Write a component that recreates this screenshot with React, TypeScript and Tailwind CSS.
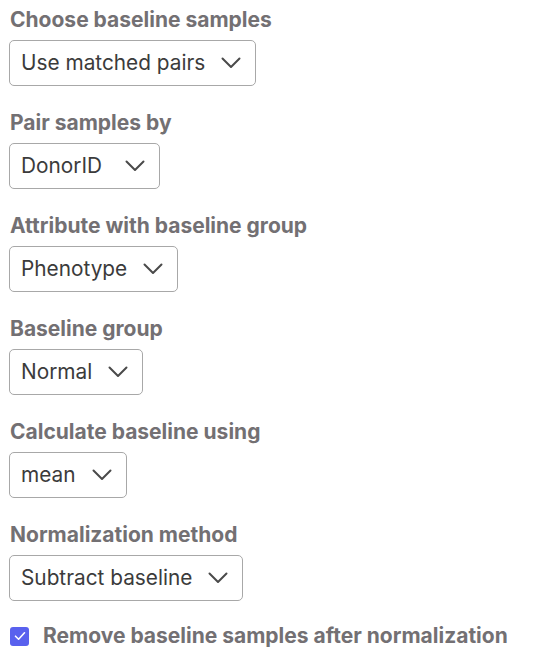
import React from "react";

const groups = [
  { label: "Choose baseline samples", value: "Use matched pairs", extra: "" },
  { label: "Pair samples by", value: "DonorID", extra: "pr-[7px]" },
  { label: "Attribute with baseline group", value: "Phenotype", extra: "" },
  { label: "Baseline group", value: "Normal", extra: "" },
  { label: "Calculate baseline using", value: "mean", extra: "" },
  { label: "Normalization method", value: "Subtract baseline", extra: "" },
];

function Chevron() {
  return (
    <svg width="20" height="12" viewBox="0 0 20 12" fill="none" className="shrink-0">
      <path d="M1.5 1.5 L10 10 L18.5 1.5" stroke="#4a4a4a" strokeWidth="2" strokeLinecap="round" strokeLinejoin="round" />
    </svg>
  );
}

export default function App() {
  return (
    <div className="w-[542px] h-[670px] bg-white pl-[9px] pt-[7px]" style={{ fontFamily: "Inter, 'Noto Sans', sans-serif" }}>
      <div className="flex flex-col gap-[24px]">
        {groups.map((g) => (
          <div key={g.label} className="flex flex-col items-start gap-[7px]">
            <div className="text-[21px] leading-[26px] font-bold text-[#737073] pl-[1px]">{g.label}</div>
            <div className="h-[46px] flex items-center gap-[16px] pl-[11px] pr-[14px] border border-[#a8a8a8] rounded-[5px] text-[20.8px] text-[#3b3b3b]">
              <span className={g.extra}>{g.value}</span>
              <Chevron />
            </div>
          </div>
        ))}
      </div>
      <div className="flex items-center gap-[14px] mt-[22px] pl-[1px]">
        <div className="w-[19px] h-[19px] rounded-[3px] bg-[#5961ee] flex items-center justify-center">
          <svg width="12" height="10" viewBox="0 0 12 10" fill="none">
            <path d="M1.5 5.2 L4.6 8.2 L10.5 1.8" stroke="white" strokeWidth="1.6" strokeLinecap="round" strokeLinejoin="round" />
          </svg>
        </div>
        <span className="text-[21px] leading-[26px] font-bold text-[#737073]">Remove baseline samples after normalization</span>
      </div>
    </div>
  );
}
